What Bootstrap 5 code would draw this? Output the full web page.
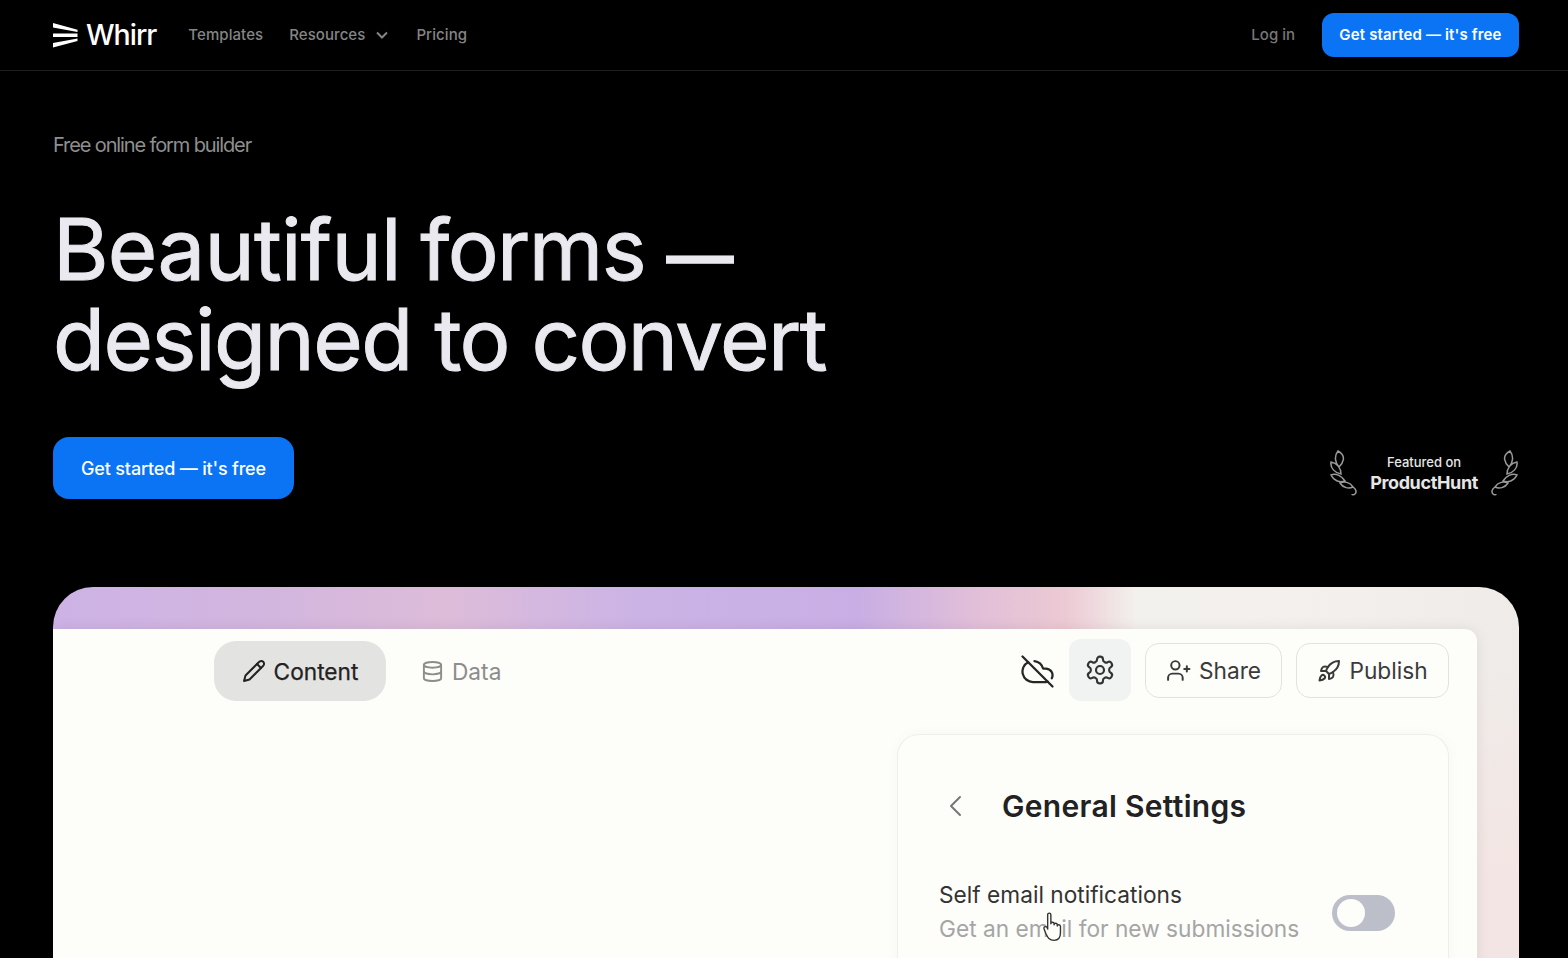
<!DOCTYPE html>
<html lang="en">
<head>
<meta charset="utf-8">
<title>Whirr</title>
<link href="https://cdn.jsdelivr.net/npm/bootstrap@5.3.0/dist/css/bootstrap.min.css" rel="stylesheet">
<style>
html,body{height:958px;overflow:hidden;background:#000;font-family:Inter,"Liberation Sans",sans-serif}
.topbar{height:71px;padding:0 49px 0 53px;border-bottom:1px solid #1f1f1f}
.brand-name{font-size:28.500px;font-weight:500;letter-spacing:-.035em;color:#fff;line-height:1;margin-left:8px}
.menu-links{margin-left:32px;gap:26px}
.menu-link{font-size:15px;font-weight:500;color:#858585;text-decoration:none;letter-spacing:.005em}
.chev{margin-left:11px;margin-right:2px}
.login-link{font-size:15px;font-weight:500;color:#777;text-decoration:none;margin-right:27px}
.cta-small{background:#0a74f5;color:#fff;font-size:15px;font-weight:600;height:44px;width:197px;border-radius:12px;border:0;letter-spacing:.01em;padding:0}
.hero-wrap{padding:0 49px 0 53px}
.eyebrow{font-size:20px;letter-spacing:-.056em;color:#8f8f8f;line-height:24px;margin:62px 0 0}
.headline{font-size:85px;font-weight:400;line-height:90px;letter-spacing:-.018em;color:#e9e9ef;margin:48px 0 0;-webkit-text-stroke:1px #e9e9ef}
.line-one{word-spacing:-3px}
.word-wide{letter-spacing:-.009em}
.dash-part{font-size:65px;margin-left:3px;letter-spacing:0;line-height:0;-webkit-text-stroke:3px #e9e9ef}
.cta-large{background:#0a74f5;color:#fff;font-size:18px;font-weight:500;height:62px;width:241px;border-radius:16px;border:0;letter-spacing:-.01em;padding:0}
.cta-row{margin-top:52px}
.feat-small{font-size:13px;font-weight:500;color:#e6e6e6;line-height:19px}
.feat-big{font-size:18px;font-weight:700;letter-spacing:-.02em;color:#e6e6e6;line-height:22px}
.feat-box{gap:13px;margin-top:9px}
.feat-text{padding-top:2px}
.showcase{height:400px;margin-top:88px;border-radius:40px 40px 0 0;overflow:hidden;padding:42px 42px 0 0;background:linear-gradient(180deg,rgba(243,228,225,0) 20%,#f3e5e3 72%),linear-gradient(90deg,#cdb2e6 0,#d3b6de 15%,#ddbcd9 27%,#cbb3e6 40%,#c8aee4 55%,#e2bfd8 63%,#ecc9d3 69%,#f3f1ee 74%,#f3efec 88%,#efebe8 100%)}
.shot{height:358px;background:#fdfdfa;border-radius:0 12px 0 0;padding:10px 28px 0 161px;box-shadow:0 0 14px rgba(0,0,0,.08)}
.tab-on{width:172px;height:60px;background:#e3e3e1;border-radius:22px;color:#222;font-size:22.700px;font-weight:400;margin-top:2px;gap:8px;-webkit-text-stroke:.25px #222}
.tab-off{color:#8d8d8d;font-size:22.700px;gap:8px;margin-left:35px;margin-top:2px}
.tab-on span,.tab-off span,.shot-btn span{position:relative;top:1px}
.icon-only{margin-right:15px;margin-top:2px}
.gear-box{width:62px;height:62px;background:#f1f2f2;border-radius:12px;margin-right:14px}
.shot-btn{height:55px;border:1.5px solid #e2e2e0;border-radius:14px;color:#3a3a3a;font-size:22.700px;gap:8px;background:#fdfdfa;margin-top:4px}
.share-btn{width:137px;margin-right:14px}
.pub-btn{width:153px}
.shot-top{height:62px}
.settings-panel{width:552px;margin-top:33px;margin-left:auto;height:260px;border:1.5px solid #eeeeec;border-bottom:0;border-radius:22px 22px 0 0;padding:46px 49px 0 41px;box-shadow:0 0 14px rgba(0,0,0,.03);position:relative}
.back-arrow{margin-left:9px}
.panel-title{font-size:30px;font-weight:600;color:#222;line-height:50px;margin:0 0 0 40px;letter-spacing:.01em}
.opt-row{margin-top:47px;justify-content:space-between}
.opt-main{font-size:22.700px;color:#333;line-height:34px}
.opt-sub{font-size:22.700px;color:#a5a5a5;line-height:33px}
.switch-track{width:63px;height:36px;border-radius:18px;background:#bcbfc9;padding:4px 5px;margin-top:17px;margin-right:4px}
.switch-knob{width:28px;height:28px;border-radius:50%;background:#fdfdfa}
.cursor-over{position:absolute;left:144px;top:176px}
</style>
</head>
<body>
<nav class="topbar d-flex align-items-center">
  <a class="d-flex align-items-center text-decoration-none" href="#">
    <svg width="25" height="25" viewBox="0 0 25 25"><path d="M0 0L24.500 6.700V9L0 4.500zM0 10.500H24.500V14H0zM0 20L24.500 15.500V18L0 24.500z" fill="#fff"/></svg>
    <span class="brand-name">Whirr</span>
  </a>
  <div class="d-flex align-items-center menu-links">
    <a class="menu-link" href="#">Templates</a>
    <a class="menu-link d-flex align-items-center" href="#">Resources<svg class="chev" width="12" height="8" viewBox="0 0 12 8" fill="none"><path d="M1 1.500l5 5 5-5" stroke="#858585" stroke-width="2"/></svg></a>
    <a class="menu-link" href="#">Pricing</a>
  </div>
  <div class="ms-auto d-flex align-items-center">
    <a class="login-link" href="#">Log in</a>
    <button class="btn cta-small" type="button">Get started — it's free</button>
  </div>
</nav>

<main>
  <section class="hero-wrap">
    <p class="eyebrow">Free online form builder</p>
    <h1 class="headline"><span class="line-one"><span class="word-wide">Beautiful</span> forms <span class="dash-part">—</span></span><br>designed to convert</h1>
    <div class="cta-row d-flex align-items-center justify-content-between">
      <button class="btn cta-large" type="button">Get started — it's free</button>
      <div class="d-flex align-items-center feat-box">
        <svg width="28" height="46" viewBox="0 0 28 46" fill="none" stroke="#999" stroke-width="1.500"><path d="M9 1C5 6 6 13 10 17C14 13 18 6 9 1zM2 12C1 18 6 23 12 24C12 18 8 13 2 12zM2 25C5 31 11 33 16 31C13 26 7 23 2 25zM11 33C14 38 20 39 24 37C21 32 15 31 11 33zM24 37C27 39 28 42 26 44C25 45 23 45 23 44"/></svg>
        <div class="text-center feat-text">
          <div class="feat-small">Featured on</div>
          <div class="feat-big">ProductHunt</div>
        </div>
        <svg width="28" height="46" viewBox="0 0 28 46" fill="none" stroke="#999" stroke-width="1.500"><g transform="matrix(-1 0 0 1 28 0)"><path d="M9 1C5 6 6 13 10 17C14 13 18 6 9 1zM2 12C1 18 6 23 12 24C12 18 8 13 2 12zM2 25C5 31 11 33 16 31C13 26 7 23 2 25zM11 33C14 38 20 39 24 37C21 32 15 31 11 33zM24 37C27 39 28 42 26 44C25 45 23 45 23 44"/></g></svg>
      </div>
    </div>
    <div class="showcase">
      <div class="shot">
        <div class="shot-top d-flex">
          <div class="tab-on d-flex align-items-center justify-content-center">
            <svg width="24" height="24" viewBox="0 0 24 24" fill="none" stroke="#222" stroke-width="2" stroke-linecap="round" stroke-linejoin="round"><path d="M17 3a2.850 2.830 0 1 1 4 4L7.500 20.500 2 22l1.500-5.500Z"/><path d="m15 5 4 4"/></svg>
            <span>Content</span>
          </div>
          <div class="tab-off d-flex align-items-center">
            <svg width="23" height="23" viewBox="0 0 24 24" fill="none" stroke="#8d8d8d" stroke-width="2" stroke-linecap="round" stroke-linejoin="round"><ellipse cx="12" cy="5" rx="9" ry="3"/><path d="M3 5V19A9 3 0 0 0 21 19V5"/><path d="M3 12A9 3 0 0 0 21 12"/></svg>
            <span>Data</span>
          </div>
          <div class="ms-auto d-flex align-items-start">
            <div class="icon-only d-flex align-items-center" style="height:60px">
              <svg width="33" height="33" viewBox="1 1 22 22" fill="none" stroke="#262626" stroke-width="1.500" stroke-linecap="round" stroke-linejoin="round"><path d="m2 2 20 20"/><path d="M5.782 5.782A7 7 0 0 0 9 19h8.500a4.500 4.500 0 0 0 1.307-.193"/><path d="M21.532 16.500A4.500 4.500 0 0 0 17.500 10h-1.790A7.008 7.008 0 0 0 10 5.070"/></svg>
            </div>
            <div class="gear-box d-flex align-items-center justify-content-center">
              <svg width="32" height="32" viewBox="0 0 24 24" fill="none" stroke="#333" stroke-width="1.600" stroke-linecap="round" stroke-linejoin="round"><path d="M12.220 2h-.44a2 2 0 0 0-2 2v.18a2 2 0 0 1-1 1.730l-.43.25a2 2 0 0 1-2 0l-.15-.08a2 2 0 0 0-2.730.73l-.22.38a2 2 0 0 0 .73 2.730l.15.1a2 2 0 0 1 1 1.720v.51a2 2 0 0 1-1 1.740l-.15.09a2 2 0 0 0-.73 2.730l.22.38a2 2 0 0 0 2.730.73l.15-.08a2 2 0 0 1 2 0l.43.25a2 2 0 0 1 1 1.730V20a2 2 0 0 0 2 2h.44a2 2 0 0 0 2-2v-.18a2 2 0 0 1 1-1.730l.43-.25a2 2 0 0 1 2 0l.15.08a2 2 0 0 0 2.730-.73l.22-.39a2 2 0 0 0-.73-2.730l-.15-.08a2 2 0 0 1-1-1.740v-.5a2 2 0 0 1 1-1.740l.15-.09a2 2 0 0 0 .73-2.730l-.22-.38a2 2 0 0 0-2.730-.73l-.15.08a2 2 0 0 1-2 0l-.43-.25a2 2 0 0 1-1-1.730V4a2 2 0 0 0-2-2z"/><circle cx="12" cy="12" r="3"/></svg>
            </div>
            <div class="shot-btn share-btn d-flex align-items-center justify-content-center">
              <svg width="25" height="25" viewBox="0 0 24 24" fill="none" stroke="#3a3a3a" stroke-width="1.900" stroke-linecap="round" stroke-linejoin="round"><path d="M16 21v-2a4 4 0 0 0-4-4H6a4 4 0 0 0-4 4v2"/><circle cx="9" cy="7" r="4"/><path d="M20 8v5M17.500 10.500h5"/></svg>
              <span>Share</span>
            </div>
            <div class="shot-btn pub-btn d-flex align-items-center justify-content-center">
              <svg width="24" height="24" viewBox="0 0 24 24" fill="none" stroke="#3a3a3a" stroke-width="2" stroke-linecap="round" stroke-linejoin="round"><path d="M4.500 16.500c-1.500 1.260-2 5-2 5s3.740-.5 5-2c.71-.84.7-2.130-.09-2.910a2.180 2.180 0 0 0-2.910-.09z"/><path d="m12 15-3-3a22 22 0 0 1 2-3.950A12.880 12.880 0 0 1 22 2c0 2.720-.78 7.500-6 11a22.350 22.350 0 0 1-4 2z"/><path d="M9 12H4s.55-3.030 2-4c1.620-1.080 5 0 5 0"/><path d="M12 15v5s3.030-.55 4-2c1.080-1.620 0-5 0-5"/></svg>
              <span>Publish</span>
            </div>
          </div>
        </div>
        <div class="settings-panel">
          <div class="d-flex align-items-center">
            <svg class="back-arrow" width="14" height="22" viewBox="0 0 14 22" fill="none" stroke="#777" stroke-width="2" stroke-linecap="round" stroke-linejoin="round"><path d="M12 2L3 11l9 9"/></svg>
            <h2 class="panel-title">General Settings</h2>
          </div>
          <div class="opt-row d-flex align-items-start">
            <div>
              <div class="opt-main">Self email notifications</div>
              <div class="opt-sub">Get an email for new submissions</div>
            </div>
            <div class="switch-track"><div class="switch-knob"></div></div>
          </div>
          <svg class="cursor-over" width="22" height="32" viewBox="0 0 20 30" fill="#fdfdfa" stroke="#333" stroke-width="1.300" stroke-linejoin="round"><path d="M5 17V3.500c0-2 3-2 3 0V12c0-2 3-2 3 0v1c0-2 3-2 3 0v1c0-1.500 3-1.500 3 .5v6c0 4-2 7-6 7-5 0-6-3-8-7l-1.500-4c-.5-2 2-2.500 3-1z"/></svg>
        </div>
      </div>
    </div>
  </section>
</main>
<script src="https://cdn.jsdelivr.net/npm/bootstrap@5.3.0/dist/js/bootstrap.bundle.min.js"></script>
</body>
</html>
